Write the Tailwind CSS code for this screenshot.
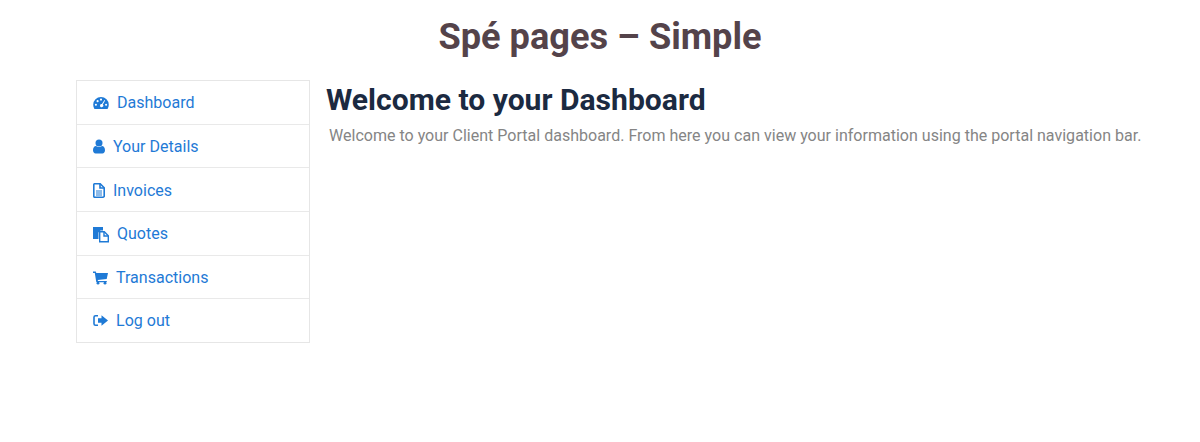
<!DOCTYPE html>
<html lang="en">
<head>
<meta charset="utf-8">
<title>Spé pages – Simple</title>
<script src="https://cdn.jsdelivr.net/npm/@tailwindcss/browser@4"></script>
</head>
<body class="bg-white font-['Roboto',sans-serif] overflow-hidden">
  <div class="h-[442px] w-[1200px]">
    <h1 class="pt-[15px] h-[80px] text-center text-[36.200px] leading-[43px] font-bold text-[#54434a]">Spé pages – Simple</h1>

    <div class="flex pl-[76px]">
      <ul class="w-[234px] h-[263px] flex flex-col border border-[#e6e6e6] text-[16.050px] text-[#1f7ad6]">
        <li class="h-[43.670px] shrink-0 flex items-center pl-[16px] pt-[2px] border-b border-[#e9e9e9]">
          <svg class="w-[16px] h-[14px] mr-[8px]" viewBox="0 1.200 16 12.600" fill="currentColor"><path fill-rule="evenodd" d="M8 1.500A7.800 7.800 0 0 0 .2 9.300c0 1.500.4 2.800 1.100 3.900.2.200.4.300.6.300h12.200c.2 0 .4-.1.600-.3.700-1.100 1.100-2.400 1.100-3.900A7.800 7.800 0 0 0 8 1.500ZM8 3a1 1 0 1 1 0 2.200A1 1 0 0 1 8 3ZM4.600 4.600a1 1 0 1 1 0 2.100 1 1 0 0 1 0-2.100Zm6.800 0 .7.500-2.300 3.900a1.600 1.600 0 1 1-.9-.5l2.500-3.900ZM2.900 8.200a1 1 0 1 1 0 2.100 1 1 0 0 1 0-2.100Zm10.200 0a1 1 0 1 1 0 2.100 1 1 0 0 1 0-2.100Z"/></svg>
          <a href="#">Dashboard</a>
        </li>
        <li class="h-[43.670px] shrink-0 flex items-center pl-[16px] pt-[2px] border-b border-[#e9e9e9]">
          <svg class="w-[12px] h-[15px] mr-[8px]" viewBox="0 0 12 14" fill="currentColor"><circle cx="6" cy="3.600" r="3.500"/><path d="M3 6.600c.8.600 1.900 1 3 1s2.200-.4 3-1c1.800.2 3 1.500 3 4.200 0 1.900-1.100 3.200-2.600 3.200H2.600C1.100 14 0 12.700 0 10.800 0 8.100 1.200 6.800 3 6.600Z"/></svg>
          <a href="#">Your Details</a>
        </li>
        <li class="h-[43.670px] shrink-0 flex items-center pl-[16px] pt-[2px] border-b border-[#e9e9e9]">
          <svg class="w-[12px] h-[15px] mr-[8px]" viewBox="0 0 12 15" fill="none" stroke="currentColor" stroke-width="1.600"><path d="M1.500.8h5.700l4 4v8.100a1.200 1.200 0 0 1-1.200 1.300H1.500A1 1 0 0 1 .8 13.200V1.600a.8.800 0 0 1 .7-.8Z"/><path d="M7 1v4h4"/><path stroke-width="1.200" d="M3 8h6M3 10h6M3 12h6"/></svg>
          <a href="#">Invoices</a>
        </li>
        <li class="h-[43.670px] shrink-0 flex items-center pl-[16px] pt-[2px] border-b border-[#e9e9e9]">
          <svg class="w-[16px] h-[17px] mr-[8px]" viewBox="0 0 16 16"><path fill="currentColor" d="M0 .5h10v3.500H7.500L5.500 6V12.500H0Z"/><path fill="#fff" stroke="currentColor" stroke-width="1.400" d="M6.700 5.200h4.600l4 4v6.100H6.700Z"/><path fill="none" stroke="currentColor" stroke-width="1.400" d="M11 5.500v4h4"/></svg>
          <a href="#">Quotes</a>
        </li>
        <li class="h-[43.670px] shrink-0 flex items-center pl-[16px] pt-[2px] border-b border-[#e9e9e9]">
          <svg class="w-[15px] h-[14px] mr-[8px]" viewBox="0 .8 15 13.200" fill="currentColor"><path d="M0 1h2.800l.5 1.500H15l-1.300 5.800-9 1 .3 1h8.800v1.300H3.300L1.800 2.300H0Z"/><circle cx="5" cy="12.600" r="1.400"/><circle cx="12" cy="12.600" r="1.400"/></svg>
          <a href="#">Transactions</a>
        </li>
        <li class="flex-1 flex items-center pl-[16px]">
          <svg class="w-[15px] h-[13px] mr-[8px]" viewBox="0 1 15 11" fill="currentColor"><path d="M8.500 1.200v3h-3.500v4.600h3.500v3L15 6.500Z"/><path fill="none" stroke="currentColor" stroke-width="1.600" d="M5 1.800H2.500A1.500 1.500 0 0 0 1 3.300v6.400a1.500 1.500 0 0 0 1.500 1.500H5"/></svg>
          <a href="#">Log out</a>
        </li>
      </ul>

      <main class="pl-[16px]">
        <h2 class="text-[30.080px] leading-[36px] h-[44px] pt-[2px] font-bold text-[#1b2a41]">Welcome to your Dashboard</h2>
        <p class="pl-[3px] text-[16.050px] leading-[24px] text-[#858585]">Welcome to your Client Portal dashboard. From here you can view your information using the portal navigation bar.</p>
      </main>
    </div>
  </div>
</body>
</html>
